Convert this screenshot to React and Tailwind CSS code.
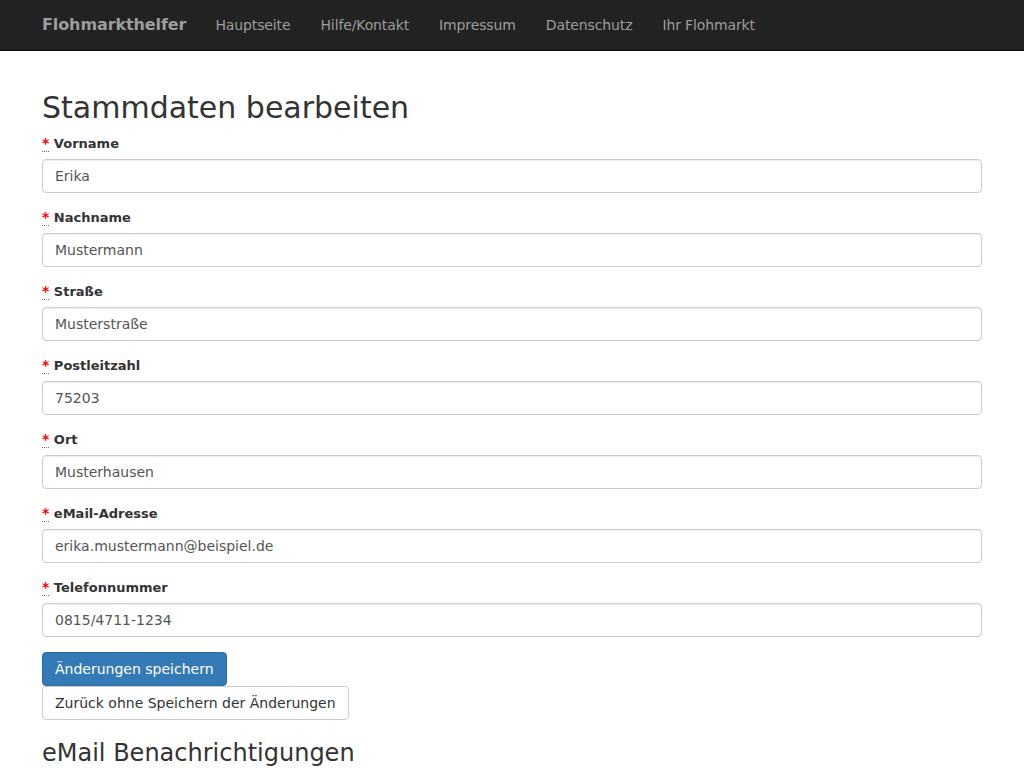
const fields = [
  { label: "Vorname", value: "Erika" },
  { label: "Nachname", value: "Mustermann" },
  { label: "Straße", value: "Musterstraße" },
  { label: "Postleitzahl", value: "75203" },
  { label: "Ort", value: "Musterhausen" },
  { label: "eMail-Adresse", value: "erika.mustermann@beispiel.de" },
  { label: "Telefonnummer", value: "0815/4711-1234" },
];

const links = ["Hauptseite", "Hilfe/Kontakt", "Impressum", "Datenschutz", "Ihr Flohmarkt"];

export default function App() {
  return (
    <div className="min-h-screen bg-white text-[14px] leading-[20px] text-[#333] font-['DejaVu_Sans',sans-serif]">
      {/* navbar */}
      <nav className="h-[51px] bg-[#222] border-b border-[#080808]">
        <div className="w-[970px] mx-auto px-[15px] flex">
          <a className="-ml-[15px] pl-[15px] pr-[14px] py-[15px] h-[50px] text-[16px] leading-[20px] font-bold tracking-[-0.1px] text-[#9d9d9d]">
            Flohmarkthelfer
          </a>
          <ul className="flex">
            {links.map((l) => (
              <li key={l}>
                <a className="block px-[15px] py-[15px] tracking-[-0.12px] text-[#9d9d9d]">{l}</a>
              </li>
            ))}
          </ul>
        </div>
      </nav>

      <div className="w-[970px] mx-auto px-[15px] pt-[20px]">
        <h2 className="mt-[20px] mb-[10px] text-[30px] leading-[33px] font-medium">Stammdaten bearbeiten</h2>

        <form>
          {fields.map((f) => (
            <div key={f.label} className="mb-[15px]">
              <label className="block h-[20px] mb-[5px] text-[13px] leading-[20px] font-bold">
                <abbr className="text-[14px] leading-none text-[#f00] no-underline border-b border-dotted border-[#777] cursor-help" title="Pflichtfeld">
                  *
                </abbr>{" "}
                {f.label}
              </label>
              <input
                readOnly
                value={f.value}
                className="block w-full h-[34px] px-[12px] py-[6px] text-[14px] leading-[20px] text-[#555] bg-white border border-[#ccc] rounded-[4px] shadow-[inset_0_1px_1px_rgba(0,0,0,0.075)] outline-none"
              />
            </div>
          ))}

          <div className="h-[34px]">
            <button
              type="button"
              className="h-[34px] px-[12px] py-[6px] text-white bg-[#337ab7] border border-[#2e6da4] rounded-[4px]"
            >
              Änderungen speichern
            </button>
          </div>
          <div className="h-[34px]">
            <button
              type="button"
              className="h-[34px] px-[12px] py-[6px] text-[#333] bg-white border border-[#ccc] rounded-[4px]"
            >
              Zurück ohne Speichern der Änderungen
            </button>
          </div>
        </form>

        <h3 className="mt-[20px] mb-[10px] text-[24px] leading-[26.4px] font-medium">eMail Benachrichtigungen</h3>
      </div>
    </div>
  );
}
